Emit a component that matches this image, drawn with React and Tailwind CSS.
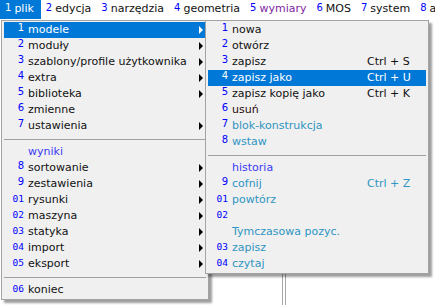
import React from "react"

const BLUE_NUM = "text-[#0000ff]"

const bar = [
  { n: "1", t: "plik", active: true },
  { n: "2", t: "edycja" },
  { n: "3", t: "narzędzia" },
  { n: "4", t: "geometria" },
  { n: "5", t: "wymiary", cls: "text-[#7f1f9f]" },
  { n: "6", t: "MOS" },
  { n: "7", t: "system" },
  { n: "8", t: "analiza" },
]

const mainMenu = [
  { n: "1", t: "modele", sub: true, active: true },
  { n: "2", t: "moduły", sub: true },
  { n: "3", t: "szablony/profile użytkownika", sub: true },
  { n: "4", t: "extra", sub: true },
  { n: "5", t: "biblioteka", sub: true },
  { n: "6", t: "zmienne" },
  { n: "7", t: "ustawienia", sub: true },
  { sep: true },
  { t: "wyniki", cls: "text-[#3a3af5]" },
  { n: "8", t: "sortowanie", sub: true },
  { n: "9", t: "zestawienia", sub: true },
  { n: "01", mono: true, t: "rysunki", sub: true },
  { n: "02", mono: true, t: "maszyna", sub: true },
  { n: "03", mono: true, t: "statyka", sub: true },
  { n: "04", mono: true, t: "import", sub: true },
  { n: "05", mono: true, t: "eksport", sub: true },
  { sep: true },
  { n: "06", mono: true, t: "koniec" },
]

const TEAL = "text-[#2f95c2]"

const subMenu = [
  { n: "1", t: "nowa" },
  { n: "2", t: "otwórz" },
  { n: "3", t: "zapisz", k: "Ctrl + S" },
  { n: "4", t: "zapisz jako", k: "Ctrl + U", active: true },
  { n: "5", t: "zapisz kopię jako", k: "Ctrl + K" },
  { n: "6", t: "usuń", cls: "text-[#2a0a0a]" },
  { n: "7", t: "blok-konstrukcja", cls: TEAL },
  { n: "8", t: "wstaw", cls: TEAL },
  { sep: true },
  { t: "historia", cls: "text-[#3a3af5]" },
  { n: "9", t: "cofnij", k: "Ctrl + Z", cls: TEAL },
  { n: "01", mono: true, t: "powtórz", cls: TEAL },
  { n: "02", mono: true, t: "" },
  { t: "Tymczasowa pozyc.", cls: TEAL },
  { n: "03", mono: true, t: "zapisz", cls: TEAL },
  { n: "04", mono: true, t: "czytaj", cls: TEAL },
]

function Num({ item, active }) {
  if (!item.n) return null
  const color = active ? "text-white" : BLUE_NUM
  if (item.mono)
    return (
      <span className={`${color} text-[9.5px] leading-none mb-[3px]`} style={{ fontFamily: "'DejaVu Sans Mono', monospace" }}>
        {item.n}
      </span>
    )
  return <span className={`${color} text-[10px] leading-none mb-[4px]`}>{item.n}</span>
}

function Menu({ items, withKeys, className }) {
  return (
    <div className={`absolute top-[20px] bg-[#f0f0f0] border border-[#a3a3a3] py-[1px] shadow-[3px_3px_2px_rgba(0,0,0,0.38)] ${className}`}>
      {items.map((item, i) =>
        item.sep ? (
          <div key={i} className="h-[10px] mx-[2px] flex items-center">
            <div className="w-full border-t border-[#a0a0a0]" />
          </div>
        ) : (
          <div
            key={i}
            className={`h-[16px] mx-[2px] flex items-center ${item.active ? "bg-[#0078d7] text-white" : item.cls || "text-[#111]"}`}
          >
            <div className="w-[20px] shrink-0 flex justify-end items-center">
              <Num item={item} active={item.active} />
            </div>
            <span className="ml-[4px] flex-1 whitespace-nowrap">{item.t}</span>
            {withKeys && <span className="w-[59px] shrink-0 whitespace-nowrap">{item.k || ""}</span>}
            {item.sub && (
              <span
                className={`mr-[3px] w-0 h-0 border-y-[4px] border-y-transparent border-l-[4px] ${item.active ? "border-l-white" : "border-l-black"}`}
              />
            )}
          </div>
        )
      )}
    </div>
  )
}

export default function App() {
  return (
    <div
      className="relative w-[435px] h-[305px] bg-white overflow-hidden text-[11px]"
      style={{ fontFamily: "'DejaVu Sans', sans-serif" }}
    >
      <div className="flex h-[19px] items-center whitespace-nowrap">
        {bar.map((b) => (
          <div
            key={b.n}
            className={`h-full shrink-0 flex items-center pl-[5px] pr-[5px] ${b.active ? "bg-[#0078d7] text-white pr-[7px]" : b.cls || "text-[#111]"}`}
          >
            <span className={`text-[10px] leading-none mb-[4px] mr-[3px] ${b.active ? "text-white" : BLUE_NUM}`}>{b.n}</span>
            <span>{b.t}</span>
          </div>
        ))}
      </div>

      {/* window frame below the menus */}
      <div className="absolute left-[282px] top-[270px] bottom-0 w-[4px] border-x border-[#a8a8a8]" />

      <Menu items={mainMenu} className="left-[1px] w-[208px]" />
      <Menu items={subMenu} withKeys className="left-[205px] w-[224px]" />
    </div>
  )
}
